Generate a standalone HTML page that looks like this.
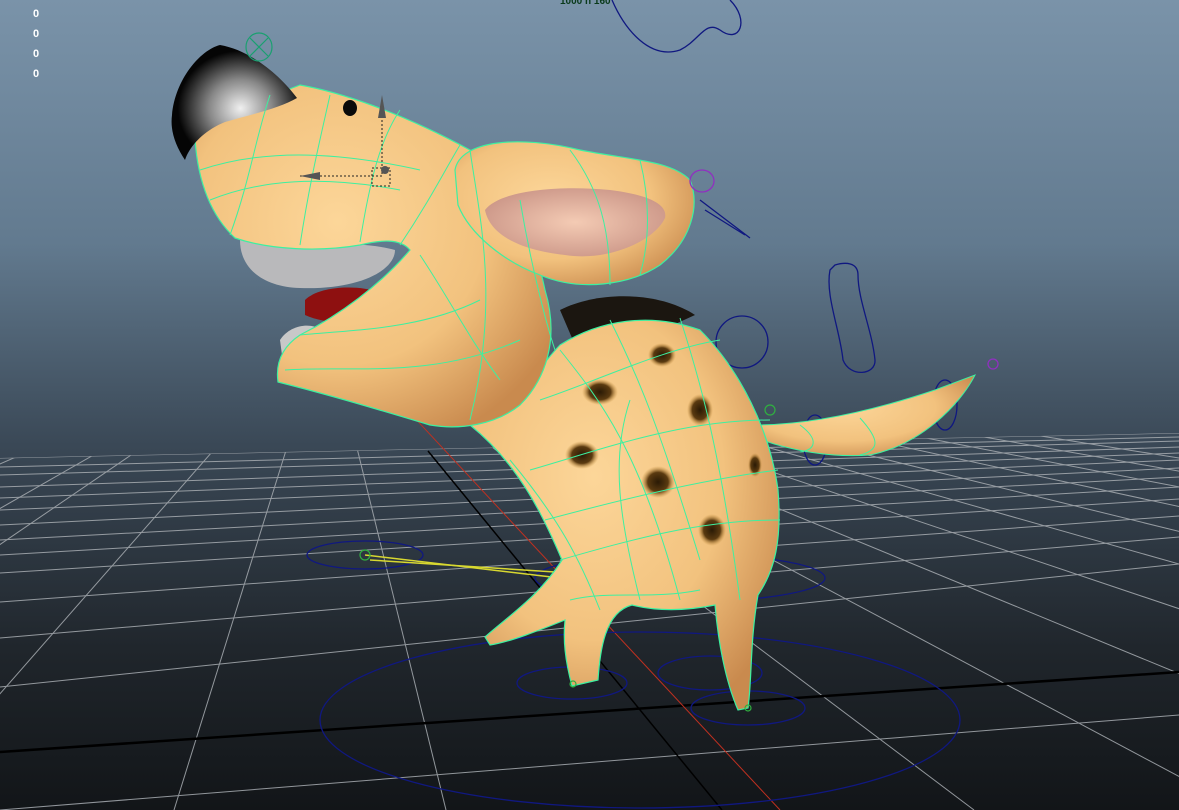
<!DOCTYPE html>
<html><head><meta charset="utf-8"><style>
html,body{margin:0;padding:0;width:1179px;height:810px;overflow:hidden;background:#3a4856}
svg{display:block}
</style></head><body>
<svg width="1179" height="810" viewBox="0 0 1179 810" xmlns="http://www.w3.org/2000/svg">
<defs>
<linearGradient id="bg" x1="0" y1="0" x2="0" y2="1">
<stop offset="0" stop-color="#7a93a9"/>
<stop offset="0.3" stop-color="#627a8f"/>
<stop offset="0.55" stop-color="#3a4856"/>
<stop offset="0.8" stop-color="#20262c"/>
<stop offset="1" stop-color="#121518"/>
</linearGradient>
<radialGradient id="tan" cx="0.4" cy="0.4" r="0.7">
<stop offset="0" stop-color="#fcd699"/>
<stop offset="0.6" stop-color="#f2c27e"/>
<stop offset="1" stop-color="#c98a4e"/>
</radialGradient>
<radialGradient id="nose" cx="0.55" cy="0.55" r="0.5">
<stop offset="0" stop-color="#f0f0f0"/>
<stop offset="0.5" stop-color="#888"/>
<stop offset="1" stop-color="#050505"/>
</radialGradient>
<radialGradient id="pink" cx="0.5" cy="0.5" r="0.6">
<stop offset="0" stop-color="#f4cbb4"/>
<stop offset="1" stop-color="#c99385"/>
</radialGradient>
<radialGradient id="spot" cx="0.5" cy="0.5" r="0.5">
<stop offset="0" stop-color="#2a1a05"/>
<stop offset="0.6" stop-color="#5a3a10"/>
<stop offset="1" stop-color="#c8903c" stop-opacity="0"/>
</radialGradient>
<clipPath id="grid"><polygon points="0,458 1179,433 1179,810 0,810"/></clipPath>
</defs>
<rect width="1179" height="810" fill="url(#bg)"/>
<g clip-path="url(#grid)" stroke="#a8adb2" stroke-width="1" opacity="0.85">
<line x1="0" y1="458" x2="1179" y2="433"/>
<line x1="0" y1="467" x2="1179" y2="437"/>
<line x1="0" y1="475" x2="1179" y2="441"/>
<line x1="0" y1="487" x2="1179" y2="447"/>
<line x1="0" y1="498" x2="1179" y2="453"/>
<line x1="0" y1="510" x2="1179" y2="460"/>
<line x1="0" y1="525" x2="1179" y2="468"/>
<line x1="0" y1="540" x2="1179" y2="477"/>
<line x1="0" y1="555" x2="1179" y2="487"/>
<line x1="0" y1="573" x2="1179" y2="499"/>
<line x1="0" y1="602" x2="1179" y2="516"/>
<line x1="0" y1="638" x2="1179" y2="537"/>
<line x1="0" y1="687" x2="1179" y2="564"/>
<line x1="0" y1="810" x2="1179" y2="715"/>
<g transform="translate(326,322)">
<line x1="0" y1="0" x2="-1657" y2="488"/>
<line x1="0" y1="0" x2="-1389" y2="488"/>
<line x1="0" y1="0" x2="-1121" y2="488"/>
<line x1="0" y1="0" x2="-853" y2="488"/>
<line x1="0" y1="0" x2="-715" y2="488"/>
<line x1="0" y1="0" x2="-428" y2="488"/>
<line x1="0" y1="0" x2="-152" y2="488"/>
<line x1="0" y1="0" x2="120" y2="488"/>
<line x1="0" y1="0" x2="648" y2="488"/>
<line x1="0" y1="0" x2="916" y2="488"/>
<line x1="0" y1="0" x2="1184" y2="488"/>
<line x1="0" y1="0" x2="1452" y2="488"/>
<line x1="0" y1="0" x2="1720" y2="488"/>
<line x1="0" y1="0" x2="1988" y2="488"/>
<line x1="0" y1="0" x2="2256" y2="488"/>
<line x1="0" y1="0" x2="2524" y2="488"/>
<line x1="0" y1="0" x2="2792" y2="488"/>
<line x1="0" y1="0" x2="3060" y2="488"/>
</g>
</g>
<line x1="0" y1="752" x2="1179" y2="672" stroke="#000" stroke-width="2.5"/>
<line x1="428" y1="451" x2="722" y2="810" stroke="#000" stroke-width="1.5"/>
<line x1="370" y1="370" x2="780" y2="810" stroke="#c03020" stroke-width="1"/>

<g fill="none" stroke="#101880" stroke-width="1.3">
<ellipse cx="640" cy="720" rx="320" ry="88"/>
<ellipse cx="572" cy="683" rx="55" ry="16"/>
<ellipse cx="710" cy="673" rx="52" ry="17"/>
<ellipse cx="748" cy="708" rx="57" ry="17"/>
<ellipse cx="365" cy="555" rx="58" ry="14"/>
<ellipse cx="680" cy="578" rx="145" ry="24"/>
<ellipse cx="742" cy="342" rx="26" ry="26"/>
<path d="M835,265 C845,262 858,262 858,275 C858,300 872,330 875,360 C876,375 850,378 843,360 C840,330 825,295 830,270 Z"/>
<path d="M612,0 C625,30 650,60 680,50 C700,40 705,20 720,30 C740,45 750,20 730,0"/>
<ellipse cx="945" cy="405" rx="12" ry="25"/>
<ellipse cx="815" cy="440" rx="12" ry="25"/>
<path d="M700,200 L750,238 M705,210 L745,235"/>
</g>
<g stroke="#d8d830" stroke-width="1.5"><line x1="365" y1="555" x2="560" y2="578"/><line x1="370" y1="560" x2="555" y2="572"/></g>

<path d="M560,310 C600,290 660,292 695,315 L640,340 L575,345 Z" fill="#1b1610"/>
<path d="M755,425 C800,425 860,415 935,390 L975,375 C960,405 920,445 870,455 C830,458 790,450 762,440 Z" fill="url(#tan)" stroke="#3df0a0" stroke-width="1"/>
<path d="M470,425 C520,400 545,360 560,345 C600,320 650,312 700,330 C740,370 770,430 778,490 C782,540 775,570 758,595 C750,640 752,680 748,708 L738,710 C725,680 718,640 715,605 C690,610 660,612 632,605 C605,612 600,650 598,680 L572,686 C565,660 563,640 565,620 C540,630 510,642 490,645 L485,637 C510,615 540,595 562,560 C545,520 520,465 470,425 Z" fill="url(#tan)" stroke="#3df0a0" stroke-width="1.2"/>
<g fill="url(#spot)">
<ellipse cx="662" cy="355" rx="14" ry="12"/>
<ellipse cx="600" cy="392" rx="18" ry="13"/>
<ellipse cx="700" cy="410" rx="13" ry="16"/>
<ellipse cx="582" cy="455" rx="17" ry="14"/>
<ellipse cx="658" cy="482" rx="17" ry="16"/>
<ellipse cx="712" cy="530" rx="14" ry="16"/>
<ellipse cx="755" cy="465" rx="7" ry="12"/>
</g>
<path d="M240,240 C300,245 360,240 395,250 C395,270 360,290 300,288 C265,287 240,270 240,240 Z" fill="#b9b9bb"/>
<path d="M305,300 C320,285 360,285 378,292 L370,320 C345,325 320,322 305,315 Z" fill="#8e1010"/>
<path d="M280,340 C290,325 310,322 322,330 L320,355 L282,355 Z" fill="#c8c8c8"/>
<path d="M195,140 C215,120 260,100 300,85 C340,92 400,112 470,150 C500,165 530,220 545,290 C560,340 545,380 520,405 C495,425 460,430 430,425 C380,410 330,395 278,382 C275,360 285,345 300,335 C340,315 380,285 410,250 C400,238 380,240 360,245 C320,252 270,250 235,238 C210,215 198,180 195,140 Z" fill="url(#tan)" stroke="#3df0a0" stroke-width="1.2"/>
<path d="M455,170 C460,140 520,135 580,150 C630,160 670,160 690,180 C700,205 692,240 660,265 C630,285 580,292 540,275 C505,262 470,235 458,205 Z" fill="url(#tan)" stroke="#3df0a0" stroke-width="1.2"/>
<path d="M485,210 C500,190 560,185 610,190 C650,195 668,205 665,218 C655,240 610,262 565,255 C520,250 490,235 485,210 Z" fill="url(#pink)"/>
<path d="M172,115 C175,80 200,50 220,45 C250,50 280,75 297,98 C280,108 250,115 225,122 C205,130 190,145 185,160 C175,145 170,130 172,115 Z" fill="url(#nose)"/>
<ellipse cx="350" cy="108" rx="7" ry="8" fill="#0a0a0a"/>
<g fill="none" stroke="#3df0a0" stroke-width="1">
<path d="M210,200 C260,180 320,175 400,190"/>
<path d="M200,170 C260,150 330,150 420,170"/>
<path d="M230,235 C250,180 255,140 270,95"/>
<path d="M300,245 C310,180 320,140 330,95"/>
<path d="M360,242 C370,180 380,140 400,110"/>
<path d="M400,245 C430,200 445,170 460,145"/>
<path d="M420,255 C450,300 470,340 500,380"/>
<path d="M300,335 C350,330 420,330 480,300"/>
<path d="M285,370 C350,365 430,380 520,340"/>
<path d="M470,150 C480,220 500,300 470,420"/>
<path d="M520,200 C530,260 545,320 555,350"/>
<path d="M570,150 C600,190 610,230 610,285"/>
<path d="M640,160 C650,200 650,240 640,275"/>
<path d="M560,350 C600,400 640,450 680,600"/>
<path d="M610,320 C640,380 660,430 700,560"/>
<path d="M680,318 C700,380 720,450 740,600"/>
<path d="M530,470 C600,450 680,420 770,420"/>
<path d="M545,520 C620,500 700,480 778,470"/>
<path d="M560,560 C630,540 700,520 780,520"/>
<path d="M540,400 C600,380 660,350 720,340"/>
<path d="M510,460 C560,520 580,560 600,610"/>
<path d="M630,400 C610,460 620,520 640,600"/>
<path d="M570,600 C610,590 650,600 700,590"/>
<path d="M800,425 C820,440 815,450 800,452"/>
<path d="M860,418 C880,440 880,450 860,455"/>
</g>
<g fill="none" stroke="#1aa070" stroke-width="1.2">
<ellipse cx="259" cy="47" rx="13" ry="14"/><path d="M250,38 L268,56 M268,38 L250,56"/>
</g>
<g fill="none" stroke="#9030c0" stroke-width="1.3">
<ellipse cx="702" cy="181" rx="12" ry="11"/><circle cx="993" cy="364" r="5"/>
</g>
<g fill="none" stroke="#30b040" stroke-width="1.2">
<circle cx="365" cy="555" r="5"/><circle cx="770" cy="410" r="5"/><circle cx="573" cy="684" r="3"/><circle cx="748" cy="708" r="3"/>
</g>
<g stroke="#222" stroke-width="1" stroke-dasharray="2,2" fill="none">
<line x1="300" y1="176" x2="382" y2="176"/><line x1="382" y1="100" x2="382" y2="176"/><rect x="372" y="168" width="18" height="18"/>
</g>
<polygon points="382,95 378,118 386,118" fill="#555"/>
<polygon points="300,176 320,172 320,180" fill="#555"/>
<circle cx="385" cy="170" r="4" fill="#555"/>
<text x="560" y="4" font-family="Liberation Sans, sans-serif" font-size="10" font-weight="bold" fill="#0a3a1a">1000 n 160</text>
<g font-family="Liberation Sans, sans-serif" font-size="11" font-weight="bold" fill="#fff">
<text x="33" y="17">0</text><text x="33" y="37">0</text><text x="33" y="57">0</text><text x="33" y="77">0</text>
</g>
</svg>
</body></html>
